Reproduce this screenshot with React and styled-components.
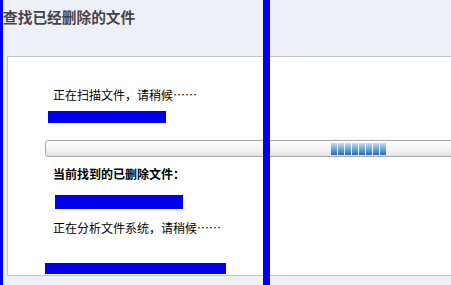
import React from "react";
import styled, { createGlobalStyle } from "styled-components";

const Global = createGlobalStyle`
  html, body {
    margin: 0;
    padding: 0;
    background: #eef0f8;
    overflow: hidden;
  }
  body {
    font-family: "Noto Sans CJK SC", "Noto Sans", sans-serif;
    font-size: 12px;
  }
`;

const Page = styled.div`
  position: relative;
  width: 451px;
  height: 285px;
  overflow: hidden;
  background: #eef0f8;
`;

const Header = styled.div`
  height: 56px;
  padding: 7px 0 0 3px;
  box-sizing: border-box;
`;

const Title = styled.h1`
  margin: 0;
  font-size: 14.7px;
  line-height: 20px;
  font-weight: bold;
  color: #444;
`;

const Panel = styled.div`
  margin-left: 7px;
  width: 520px;
  height: 220px;
  box-sizing: border-box;
  background: #fff;
  border: 1px solid #c4c4c8;
  padding-top: 30px;
  display: flex;
  flex-direction: column;
`;

const Line = styled.div`
  margin-left: 45px;
  height: 16px;
  line-height: 16px;
  color: #000;
  font-weight: ${(p) => (p.$bold ? "bold" : "normal")};
  margin-top: ${(p) => p.$top}px;
`;

const Bar = styled.div`
  background: #0000ee;
  margin-left: ${(p) => p.$left}px;
  width: ${(p) => p.$width}px;
  height: ${(p) => p.$height}px;
  margin-top: ${(p) => p.$top}px;
`;

const Progress = styled.div`
  margin: 17px 0 0 37px;
  width: 460px;
  height: 17px;
  box-sizing: border-box;
  border: 1px solid #a8a8a8;
  border-radius: 3px;
  background: linear-gradient(#ffffff, #f6f6f6 45%, #e4e4e4);
  display: flex;
  align-items: center;
`;

const Chunks = styled.div`
  margin-left: 285px;
  display: flex;
  gap: 1px;
  height: 12px;
  margin-top: 1px;
`;

const Chunk = styled.span`
  width: 6px;
  height: 100%;
  background: linear-gradient(#b6e0f6, #6ea8d8 50%, #2f66a8);
`;

const Stripe = styled.div`
  position: absolute;
  top: 0;
  bottom: 0;
  left: ${(p) => p.$left}px;
  width: ${(p) => p.$width}px;
  background: #0000ee;
`;

export default function App() {
  return (
    <>
      <Global />
      <Page>
        <Header>
          <Title>查找已经删除的文件</Title>
        </Header>
        <Panel>
          <Line $top={0}>正在扫描文件，请稍候……</Line>
          <Bar $left={40} $width={118} $height={12} $top={8} />
          <Progress>
            <Chunks>
              {Array.from({ length: 8 }).map((_, i) => (
                <Chunk key={i} />
              ))}
            </Chunks>
          </Progress>
          <Line $bold $top={9}>当前找到的已删除文件：</Line>
          <Bar $left={47} $width={128} $height={14} $top={13} />
          <Line $top={11}>正在分析文件系统，请稍候……</Line>
          <Bar $left={37} $width={181} $height={11} $top={27} />
        </Panel>
        <Stripe $left={0} $width={3} />
        <Stripe $left={263} $width={7} />
      </Page>
    </>
  );
}
